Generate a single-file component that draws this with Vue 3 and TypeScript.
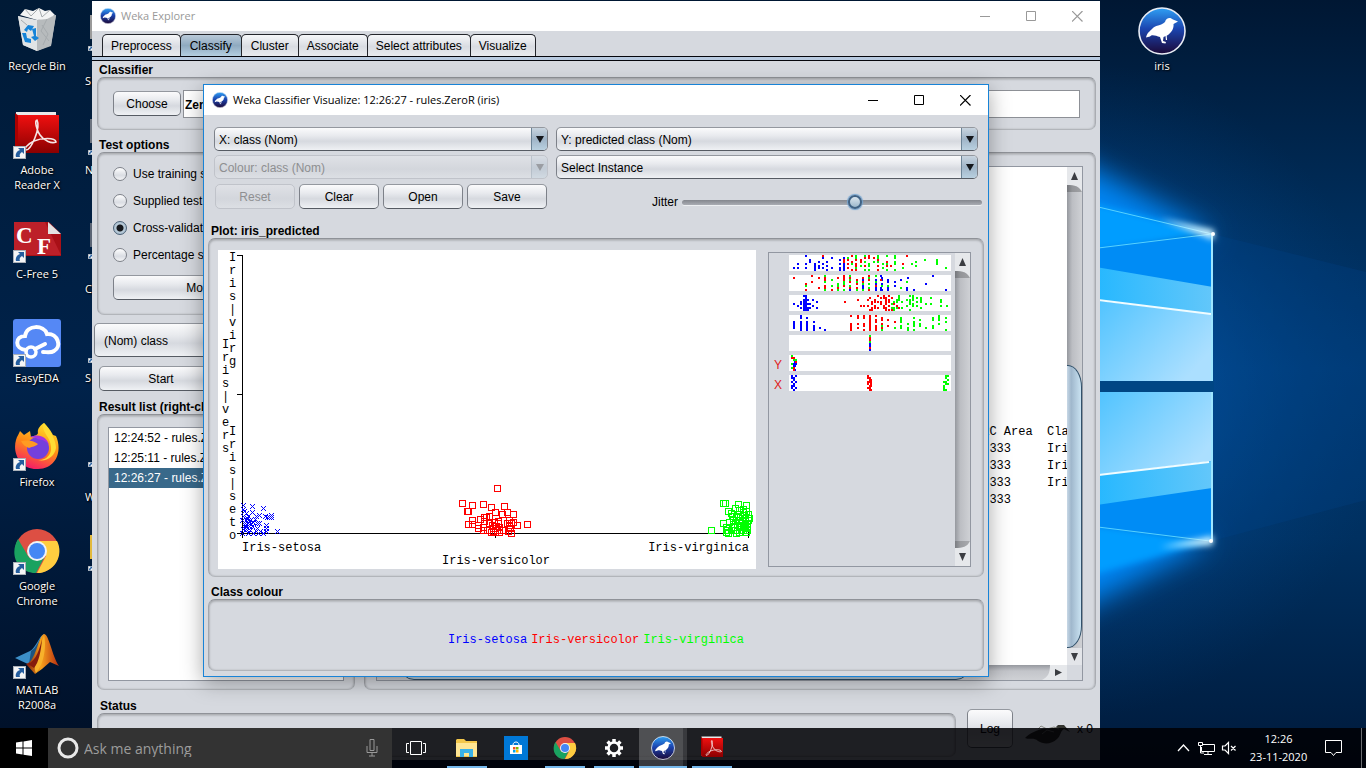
<script setup lang="ts">
import { ref } from 'vue'

type Colour = 'blue' | 'red' | 'lime'
type Point = [number, number]

const tabs = ['Preprocess', 'Classify', 'Cluster', 'Associate', 'Select attributes', 'Visualize']
const activeTab = ref('Classify')

const testOptions = ['Use training set', 'Supplied test set', 'Cross-validation', 'Percentage split']
const testOption = ref('Cross-validation')

const results = ['12:24:52 - rules.ZeroR', '12:25:11 - rules.ZeroR', '12:26:27 - rules.ZeroR']
const selectedResult = ref(2)

const jitter = ref(58)

const desktopIcons = [
  { id: 'bin', label: ['Recycle Bin'], shortcut: false },
  { id: 'adobe', label: ['Adobe', 'Reader X'], shortcut: true },
  { id: 'cfree', label: ['C-Free 5'], shortcut: true },
  { id: 'eda', label: ['EasyEDA'], shortcut: true },
  { id: 'firefox', label: ['Firefox'], shortcut: true },
  { id: 'chrome', label: ['Google', 'Chrome'], shortcut: true },
  { id: 'matlab', label: ['MATLAB', 'R2008a'], shortcut: true },
]

const hiddenColumn = [
  { tint: '#9a9a9a', text: ['', 'S'] },
  { tint: '#6d7480', text: ['N', ''] },
  { tint: '#5a6474', text: ['', 'C'] },
  { tint: '#04214a', text: ['S', ''] },
  { tint: '#04214a', text: ['', 'W'] },
  { tint: '#e2b93b', text: ['', ''] },
]

const classes: { name: string; colour: Colour }[] = [
  { name: 'Iris-setosa', colour: 'blue' },
  { name: 'Iris-versicolor', colour: 'red' },
  { name: 'Iris-virginica', colour: 'lime' },
]

const setosa: Point[] = [
  [25, 255], [34, 256], [45, 258], [25, 259], [34, 262], [28, 263], [41, 265], [38, 266], [30, 266], [47, 266],
  [53, 265], [51, 267], [53, 267], [49, 267], [25, 266], [24, 270], [28, 270], [32, 270], [35, 272], [39, 273],
  [41, 273], [30, 273], [27, 275], [31, 276], [34, 276], [48, 275], [48, 278], [25, 279], [28, 279], [32, 280],
  [38, 281], [42, 281], [48, 281], [59, 281], [24, 283], [30, 283], [35, 283], [40, 283], [45, 283], [28, 277],
  [33, 274], [29, 268], [37, 269], [26, 261], [39, 278], [31, 271], [27, 273],
]

const versicolor: Point[] = [
  [279, 238], [244, 253], [254, 255], [265, 254], [273, 257], [286, 256], [250, 261], [249, 261], [277, 262],
  [289, 262], [284, 264], [295, 264], [254, 270], [262, 269], [266, 267], [268, 267], [271, 266], [250, 274],
  [254, 274], [266, 271], [260, 275], [260, 278], [265, 277], [265, 280], [271, 273], [276, 272], [280, 273],
  [274, 275], [269, 280], [273, 282], [277, 278], [281, 277], [279, 280], [277, 282], [281, 282], [275, 278],
  [291, 270], [289, 273], [293, 273], [291, 275], [295, 272], [299, 275], [309, 274], [285, 280], [290, 281],
  [293, 283], [292, 278], [280, 271], [275, 281], [278, 276],
]

const virginica: Point[] = [
  [505, 253], [507, 253], [520, 254], [528, 255], [493, 280], [505, 273], [510, 261], [513, 263], [517, 258],
  [514, 266], [521, 260], [525, 259], [528, 261], [530, 264], [526, 265], [522, 266], [518, 267], [531, 268],
  [527, 270], [524, 271], [521, 270], [511, 272], [515, 274], [508, 277], [509, 280], [510, 283], [518, 283],
  [513, 280], [516, 277], [519, 275], [522, 277], [526, 275], [529, 273], [529, 277], [525, 280], [521, 282],
  [529, 280], [523, 273], [527, 268], [530, 270], [517, 280], [508, 282], [525, 262], [520, 264], [525, 277],
  [515, 270], [528, 282], [527, 278],
]

const cross = ([x, y]: Point) => `M${x - 2} ${y - 2}l5 5m0 -5l-5 5`
const square = ([x, y]: Point) => `M${x - 3} ${y - 3}h6v6h-6z`
const setosaPath = setosa.map(cross).join('')
const versicolorPath = versicolor.map(square).join('')
const virginicaPath = virginica.map(square).join('')

// Labels of the vertical axis are stacked one letter per line.
const axisLabels = [
  { x: 11, y: 11, letters: 'Iris|virg' },
  { x: 4, y: 98, letters: 'Iris|vers' },
  { x: 11, y: 185, letters: 'Iris|seto' },
]

// Each strip is a list of columns: x position, then eight cells from top to bottom.
const strips: { mark: string; columns: Record<number, string> }[] = [
  {
    mark: '',
    columns: {
      4: '......b.', 8: '....b.b.', 16: 'b...b.b.', 20: '..bb....', 25: '....bbbb', 29: '...b.bb.', 33: 'rb..b.b.',
      37: '...b.b.b', 42: '.b....b.', 50: '..b.b.bb', 54: '.brrbbbb', 58: '.gr.r.r.', 62: 'r..rg..r', 66: 'ggr.rrgr',
      71: '..rr.g..', 75: 'gr.g.r.g', 79: 'rr..gg.g', 84: '.r.g....', 88: 'ggrg.r.r', 93: '....g.g.', 97: 'g..rgr.g',
      101: '.....r..', 105: 'gg.gg..g', 109: '.......', 113: '....r.g.', 117: 'r.......', 122: '....g...', 126: '...g.g..',
      135: '..g.....', 147: '..ggg...', 156: '......g.',
    },
  },
  {
    mark: '',
    columns: {
      4: '.r......', 16: '....rg.r', 22: 'r..r....', 29: '.r....r.', 35: 'grrg.rrg', 42: '..g..g.r', 48: '.r..ggrg',
      54: 'rrrggr.g', 60: 'grgr.grb', 67: '..rgr.rg', 73: '.rbrgbbg', 79: 'rgr.g.gr', 86: 'g.bgbrbb', 91: 'b.r...bb',
      92: '.bb.bg.b', 98: '..bb.gbb', 105: '...b.b..', 111: '..b...g.', 117: '...g..bb', 118: '.b......', 124: '.......b',
      136: '....b...', 143: 'b.......', 156: '.......b',
    },
  },
  {
    mark: '',
    columns: {
      4: '....b...', 8: '.....b..', 11: '...bb.b.', 14: 'b.bbbbbb', 16: 'bbbbbbbb', 18: '..b.b.bb', 20: '....b.b.', 23: '..b..b..',
      27: '...b..b.', 55: '...r....', 68: '..r.....', 71: '.....r..', 74: '.....r..', 78: '..r..r..', 80: '.r.....r',
      82: '...rr.rr', 85: '..rr.rr.', 88: 'r..r..r.', 91: '.r.rr...', 94: 'rr...rr.', 96: '.rrrr.rr', 99: 'r.rr.r.r',
      102: '.r..g.gr', 104: '...gr.gg', 107: '..gg.rg.', 109: 'ggg...r.', 112: '...g..g.', 117: '..g..g..', 120: 'g.ggg..g',
      123: 'ggg.gg..', 127: '.g.g.g..', 131: '.ggg..g.', 136: '....g...', 141: '.g..g...', 151: '..gg.g..', 157: '.....g..',
    },
  },
  {
    mark: '',
    columns: {
      4: '...bbbb.', 11: 'bb.bbbbb', 17: '.b.bbbbb', 24: '...b.bbb', 30: '......b.', 35: '.......b', 61: 'r...rrrr', 68: 'rr..r.r.',
      74: 'rr..rr.r', 80: 'rrrrrrrr', 86: 'r.rr.rrr', 92: '.rr.rgrg', 98: '..r..r..', 105: '...r..g.', 111: '.ggg.gg.',
      118: '....g.gg', 124: '.g.ggg.g', 130: '..g.gg..', 136: '......g.', 143: '.gg..gg.', 149: 'ggg.g...', 156: '.g.g...g',
    },
  },
  { mark: '', columns: { 80: 'grrgbbrb' } },
  { mark: 'Y', columns: { 2: 'gr..g.g.', 4: '.rg.bbrr', 5: '..rbbb.b', 6: '..grb...' } },
  {
    mark: 'X',
    columns: {
      2: 'bb.b.bb.', 4: '.bb.bb.b', 6: 'b..b..b.', 78: 'rr.rr.r.', 80: '.rrr.rrr', 81: '..rrrr.r', 154: '...g.ggg', 156: 'gg.gg..g',
      158: 'g.g.g...',
    },
  },
]

const stripPath = (columns: Record<number, string>, key: string) =>
  Object.entries(columns)
    .flatMap(([x, cells]) => [...cells].map((c, i) => (c === key ? `M${x} ${i * 2}h2v2h-2z` : '')))
    .join('')

const report = ['PRC Area  Class', '0.333     Iris', '0.333     Iris', '0.333     Iris', '0.333'].join('\n')
</script>

<template>
  <main class="desktop">
    <svg class="defs" aria-hidden="true">
      <defs>
        <linearGradient id="g-weka" x1="0" y1="0" x2="0" y2="1">
          <stop offset="0" stop-color="#2fa0f4" /><stop offset=".45" stop-color="#1b45b0" /><stop offset="1" stop-color="#1b0837" />
        </linearGradient>
        <linearGradient id="g-red" x1="0" y1="0" x2="0" y2="1">
          <stop offset="0" stop-color="#f01010" /><stop offset="1" stop-color="#8a0000" />
        </linearGradient>
        <linearGradient id="g-fox" x1=".7" y1="0" x2=".3" y2="1">
          <stop offset="0" stop-color="#ffe22b" /><stop offset=".5" stop-color="#ff8a16" /><stop offset="1" stop-color="#f5156c" />
        </linearGradient>
        <linearGradient id="g-peak" x1="0" y1="0" x2="1" y2="0">
          <stop offset="0" stop-color="#7a1408" /><stop offset=".45" stop-color="#f7a21c" /><stop offset="1" stop-color="#b52a10" />
        </linearGradient>
        <symbol id="i-weka" viewBox="0 0 48 48">
          <circle cx="24" cy="24" r="23" fill="url(#g-weka)" stroke="#e9edf5" stroke-width="1.6" />
          <path d="M40 14.500L35.500 17C36 21 34 25 30 28L25.500 30L25 34L28 35L27.500 36.500L24 36L22 30C18 29 14 27 12 29.500L8 30.500C9 26 12 24 14 22C17 18 23 19 27 15C28 11 32 9.500 35 12.500Z" fill="#fff" />
          <path d="M28 28L28.500 33" stroke="#fff" stroke-width="1.200" />
        </symbol>
        <symbol id="i-bin" viewBox="0 0 48 48">
          <path d="M5 9L10 38L24 44L38 38L43 8L24 15Z" fill="#c9ccce" />
          <path d="M5 9L24 13L24 44L10 38Z" fill="#e1e4e5" />
          <path d="M24 13L43 8L38 39L24 44Z" fill="#b7bbbd" />
          <path d="M7 8L12 2L20 4L26 1L32 4L37 3L42 8L34 12L24 13Z" fill="#f3f4f4" />
          <path d="M12 2L18 9L26 1L29 10L37 3M29 18L35 27L30 38M34 12L28 24L36 34M8 13L14 18" stroke="#a6abae" fill="none" />
          <path d="M11 23L15 18L21 19L18 24L15 22L14 25ZM19 22L23 21L23 29L26 31L22 34L18 30L21 29ZM9 26L13 26L14 31L18 32L18 36L12 35Z" fill="#1684d8" />
        </symbol>
        <symbol id="i-adobe" viewBox="0 0 48 48">
          <path d="M3 1H43V4L6 5L5 40L2 38Z" fill="#e9e9ea" />
          <path d="M2 2L6 5V42L2 39Z" fill="#a00" />
          <rect x="5" y="4" width="41" height="38" fill="url(#g-red)" />
          <path d="M24 9C21 9 24 20 27 24C31 30 39 33 43 31C42 26 28 27 21 30C13 34 11 38 13 39C18 39 28 17 24 9Z" fill="none" stroke="#f5e6e6" stroke-width="1.600" />
        </symbol>
        <symbol id="i-cfree" viewBox="0 0 48 48">
          <path d="M1 7H36L48 19V41H1Z" fill="#a91017" /><path d="M1 7H32L48 40H1Z" fill="#bd2029" />
          <path d="M35 7L48 19H35Z" fill="#e3e3e3" />
          <text x="3" y="28" class="cf">C</text><text x="24" y="39" class="cf">F</text>
        </symbol>
        <symbol id="i-eda" viewBox="0 0 48 48">
          <rect width="48" height="48" rx="3" fill="#5588f5" />
          <path d="M13 31C1 30 2 17 12 17C14 5 31 6 34 15C45 14 49 28 41 32C38 34 34 33 30 33" fill="none" stroke="#fff" stroke-width="4" stroke-linecap="round" />
          <circle cx="18" cy="33" r="5" fill="none" stroke="#fff" stroke-width="3.500" /><path d="M22 30L32 25" stroke="#fff" stroke-width="4" stroke-linecap="round" />
        </symbol>
        <symbol id="i-firefox" viewBox="0 0 48 48">
          <path d="M31 0C36 5 38 8 40 12L43 13C49 26 45 45 25 46C8 47-1 31 3 17C4 13 6 11 7 8L11 12L17 8L18 14C22 12 24 13 25 10C24 7 27 2 31 0Z" fill="url(#g-fox)" />
          <circle cx="25" cy="25" r="11" fill="#7440dc" /><path d="M17 14C26 10 34 14 36 22C31 15 27 18 23 15Z" fill="#a733df" />
          <path d="M8 18C14 17 20 17 25 21C22 24 20 23 16 25C13 24 10 22 8 18Z" fill="#ff9b22" />
          <path d="M31 0C27 8 38 14 38 24C39 32 32 38 25 37C34 39 42 33 43 25C43 19 39 9 31 0Z" fill="#ffdc34" />
        </symbol>
        <symbol id="i-chrome" viewBox="0 0 48 48">
          <circle cx="24" cy="24" r="22" fill="#dd4f43" />
          <path d="M24 14H44A22 22 0 0 1 24 46L33 29Z" fill="#ffcd40" />
          <path d="M5 12L15 29C18 33 24 35 32 29L23 46C4 46-4 27 5 12Z" fill="#1aa260" />
          <circle cx="24" cy="24" r="10" fill="#f2f3f5" /><circle cx="24" cy="24" r="8" fill="#4587f4" />
        </symbol>
        <symbol id="i-matlab" viewBox="0 0 48 48">
          <path d="M2 27L17 20C23 17 26 5 31 3L28 24L17 34Z" fill="#3c8fc8" /><path d="M18 20C24 17 26 7 31 3L26 23L16 33Z" fill="#1e547f" />
          <path d="M31 3C36 3 39 25 46 35L37 31L29 38L22 43L13 33C23 31 25 5 31 3Z" fill="url(#g-peak)" />
          <path d="M31 4C34 17 30 35 23 42C19 34 27 18 31 4Z" fill="#f7b12b" /><path d="M15 33C23 30 27 17 29 8C28 20 26 31 21 37Z" fill="#851a0c" />
        </symbol>
        <symbol id="i-shortcut" viewBox="0 0 13 13">
          <rect x=".5" y=".5" width="12" height="12" fill="#f4f5f6" stroke="#aab0b8" />
          <path d="M5 2H11V8L9 6C7 7 6 9 7 11H3C2 8 4 5 7 4Z" fill="#245d9e" />
        </symbol>
        <symbol id="i-win-min" viewBox="0 0 11 11"><path d="M0 5.500H10" stroke="currentColor" fill="none" /></symbol>
        <symbol id="i-win-max" viewBox="0 0 11 11"><path d="M.5 .5H9.500V9.500H.5Z" stroke="currentColor" fill="none" /></symbol>
        <symbol id="i-win-close" viewBox="0 0 11 11"><path d="M0 0L10.500 10.500M10.500 0L0 10.500" stroke="currentColor" stroke-width="1.200" fill="none" /></symbol>
      </defs>
    </svg>

    <svg class="wallpaper" viewBox="0 0 1366 768" preserveAspectRatio="none" aria-hidden="true">
      <defs>
        <linearGradient id="w-base" x1="0" y1="0" x2="0" y2="1">
          <stop offset="0" stop-color="#001733" /><stop offset=".28" stop-color="#002d5a" /><stop offset=".48" stop-color="#003870" />
          <stop offset=".7" stop-color="#003060" /><stop offset="1" stop-color="#001a3b" />
        </linearGradient>
        <linearGradient id="w-left" x1="0" y1="0" x2="0" y2="1">
          <stop offset="0" stop-color="#001a36" /><stop offset=".5" stop-color="#00224a" /><stop offset="1" stop-color="#000f26" />
        </linearGradient>
        <radialGradient id="w-glow" gradientUnits="userSpaceOnUse" cx="1060" cy="390" r="330">
          <stop offset="0" stop-color="#0a8cff" /><stop offset=".5" stop-color="#0868c8" stop-opacity=".6" /><stop offset="1" stop-color="#004a95" stop-opacity="0" />
        </radialGradient>
        <linearGradient id="w-pane" x1="0" y1="0" x2="1" y2=".6">
          <stop offset="0" stop-color="#4cc2ff" /><stop offset="1" stop-color="#abdfff" />
        </linearGradient>
        <linearGradient id="w-cyan" x1="0" y1="0" x2="1" y2="0">
          <stop offset="0" stop-color="#23b7ff" /><stop offset="1" stop-color="#63c7fa" />
        </linearGradient>
        <filter id="w-soft" x="-30%" y="-30%" width="160%" height="160%"><feGaussianBlur stdDeviation="14" /></filter>
        <filter id="w-spark" x="-50%" y="-50%" width="200%" height="200%"><feGaussianBlur stdDeviation="3" /></filter>
      </defs>
      <rect width="1366" height="768" fill="url(#w-base)" />
      <rect width="300" height="768" fill="url(#w-left)" />
      <rect x="700" width="666" height="768" fill="url(#w-glow)" opacity=".5" />
      <path d="M1213 234L1366 272V500L1212 541Z" fill="#00458c" opacity=".25" />
      <path d="M1050 145L1213 234L1050 290ZM1050 490L1212 541L1050 625Z" fill="#0584f2" filter="url(#w-soft)" />
      <path d="M1080 200L1213 234L1080 252ZM1080 524L1212 541L1080 578Z" fill="#009dff" filter="url(#w-spark)" />
      <path d="M1090 250L1213 234V381H1090Z" fill="#008cf5" />
      <path d="M1090 266L1213 287V314L1090 300Z" fill="url(#w-cyan)" />
      <path d="M1090 300L1213 314V381H1090Z" fill="url(#w-pane)" />
      <path d="M1090 392H1212V541L1090 526Z" fill="#008cf5" />
      <path d="M1090 392H1212V461L1090 476Z" fill="url(#w-pane)" />
      <path d="M1090 476L1212 461V488L1090 506Z" fill="url(#w-cyan)" />
      <path d="M1090 381H1214V392H1090Z" fill="#004684" />
      <path d="M1090 299L1211 314M1090 476L1209 462" stroke="#f0fcff" stroke-width="2" />
      <path d="M1090 205L1212 234M1090 249L1212 234M1090 526L1210 541" stroke="#57d2ff" stroke-width="1" />
      <path d="M1212 235V381M1212 392V541" stroke="#9ee6ff" stroke-width="2" />
      <path d="M1160 219L1214 230V240ZM1160 547L1213 536V545Z" fill="#d8f6ff" filter="url(#w-spark)" />
      <circle cx="1213" cy="234" r="2" fill="#fff" /><circle cx="1211" cy="541" r="2" fill="#fff" />
    </svg>

    <nav class="icons" aria-label="Desktop">
      <a v-for="icon in desktopIcons" :key="icon.id" class="shortcut" href="#">
        <span class="art">
          <svg class="picture"><use :href="`#i-${icon.id}`" /></svg>
          <svg v-if="icon.shortcut" class="badge"><use href="#i-shortcut" /></svg>
        </span>
        <span v-for="line in icon.label" :key="line" class="caption">{{ line }}</span>
      </a>
    </nav>

    <div class="second-column" aria-hidden="true">
      <div v-for="(item, i) in hiddenColumn" :key="i" class="sliver">
        <span class="sliver-art" :style="{ background: item.tint }"></span>
        <svg class="sliver-badge"><use href="#i-shortcut" /></svg>
        <span class="caption">{{ item.text[0] }}</span>
        <span class="caption">{{ item.text[1] }}</span>
      </div>
    </div>

    <a class="shortcut iris" href="#">
      <span class="art"><svg class="picture"><use href="#i-weka" /></svg></span>
      <span class="caption">iris</span>
    </a>

    <section class="window explorer" aria-label="Weka Explorer">
      <header class="titlebar inactive">
        <svg class="app-icon"><use href="#i-weka" /></svg>
        <h1>Weka Explorer</h1>
        <button aria-label="Minimize"><svg><use href="#i-win-min" /></svg></button>
        <button aria-label="Maximize"><svg><use href="#i-win-max" /></svg></button>
        <button aria-label="Close"><svg><use href="#i-win-close" /></svg></button>
      </header>
      <div class="tabs" role="tablist">
        <button
          v-for="tab in tabs"
          :key="tab"
          role="tab"
          :aria-selected="tab === activeTab"
          :class="['tab', { active: tab === activeTab }]"
          @click="activeTab = tab"
        >{{ tab }}</button>
      </div>
      <div class="tab-rule"></div>

      <div class="explorer-body">
        <h2>Classifier</h2>
        <div class="group classifier">
          <button class="nimbus choose">Choose</button>
          <input class="scheme" aria-label="Classifier scheme" value="ZeroR" readonly />
        </div>

        <div class="columns">
          <div class="left">
            <h2 class="spaced">Test options</h2>
            <div class="group options">
              <label v-for="option in testOptions" :key="option">
                <input v-model="testOption" type="radio" name="test" :value="option" />{{ option }}
              </label>
              <button class="nimbus">More options...</button>
            </div>
            <div class="combo big">
              <select aria-label="Class attribute"><option>(Nom) class</option></select>
            </div>
            <button class="nimbus start">Start</button>
            <h2 class="spaced">Result list (right-click for options)</h2>
            <div class="group result-group">
              <ul class="results">
                <li v-for="(result, i) in results" :key="result" :class="{ selected: i === selectedResult }" @click="selectedResult = i">{{ result }}</li>
              </ul>
            </div>
          </div>
          <div class="right">
            <h2 class="spaced">Classifier output</h2>
            <div class="group output-group">
              <div class="output">
                <pre>{{ report }}</pre>
                <div class="vscroll">
                  <svg class="cap" viewBox="0 0 15 25"><path d="M0 0H15V25C12 19 8 18 0 18Z" fill="#e6e8eb" /><path d="M0 18C8 18 12 19 15 25L15 27L0 27Z" fill="#000" opacity=".22" /><path d="M7.500 5L11 13H4Z" fill="#3b3d42" /></svg>
                  <div class="track"><div class="thumb"></div></div>
                  <svg class="cap-end" viewBox="0 0 15 17"><rect width="15" height="17" fill="#e3e5e9" /><path d="M4 5H11L7.500 13Z" fill="#3b3d42" /></svg>
                </div>
                <div class="hscroll">
                  <div class="hthumb"></div>
                  <svg class="hcap" viewBox="0 0 25 15"><path d="M8 0H25V15H0C6 12 8 8 8 0Z" fill="#e6e8eb" /><path d="M13 4L20 7.500L13 11Z" fill="#3b3d42" /></svg>
                </div>
              </div>
            </div>
          </div>
        </div>

        <footer class="status">
          <div class="status-main">
            <h2 class="spaced">Status</h2>
            <div class="group"></div>
          </div>
          <button class="nimbus log">Log</button>
          <svg class="kiwi" viewBox="0 0 46 22">
            <path d="M0 14C5 9 10 7 17 5C24 3 27 5 31 3L33 1H39L45 8L39 5C35 7 36 12 32 15C27 20 19 21 13 17C9 13 5 16 0 14Z" fill="#33342f" />
            <path d="M13 5L16 2L22 5L29 3L34 5M17 10L22 6L29 8" stroke="#888983" fill="none" />
          </svg>
          <span class="count">x 0</span>
        </footer>
      </div>
    </section>

    <section class="window dialog" aria-label="Weka Classifier Visualize">
      <header class="titlebar">
        <svg class="app-icon"><use href="#i-weka" /></svg>
        <h1>Weka Classifier Visualize: 12:26:27 - rules.ZeroR (iris)</h1>
        <button aria-label="Minimize"><svg><use href="#i-win-min" /></svg></button>
        <button aria-label="Maximize"><svg><use href="#i-win-max" /></svg></button>
        <button aria-label="Close"><svg><use href="#i-win-close" /></svg></button>
      </header>

      <div class="controls">
        <div class="combo"><select aria-label="X axis"><option>X: class (Nom)</option></select><span class="arrow"></span></div>
        <div class="combo"><select aria-label="Y axis"><option>Y: predicted class (Nom)</option></select><span class="arrow"></span></div>
        <div class="combo disabled"><select aria-label="Colour" disabled><option>Colour: class (Nom)</option></select><span class="arrow"></span></div>
        <div class="combo"><select aria-label="Selection shape"><option>Select Instance</option></select><span class="arrow"></span></div>
        <div class="buttons">
          <button class="nimbus" disabled>Reset</button>
          <button class="nimbus">Clear</button>
          <button class="nimbus">Open</button>
          <button class="nimbus">Save</button>
        </div>
        <div class="jitter">
          <label for="jitter">Jitter</label>
          <input id="jitter" v-model="jitter" type="range" min="0" max="100" />
        </div>
      </div>

      <h2 class="plot-title">Plot: iris_predicted</h2>
      <div class="group plot-group">
        <svg class="plot" viewBox="0 0 538 319" role="img" aria-label="Plot of class against predicted class">
          <rect width="538" height="319" fill="#fff" />
          <g v-for="label in axisLabels" :key="label.y">
            <text v-for="(letter, i) in label.letters" :key="i" :x="label.x" :y="label.y + i * 13">{{ letter }}</text>
          </g>
          <path class="axis" d="M24.500 5V288M19 5.500H24M19 144.500H24M19 283.500H530.500M277.500 284V288M530.500 281V288" />
          <g class="marks">
            <path :d="setosaPath" stroke="blue" />
            <path :d="versicolorPath" stroke="red" transform="translate(.5 .5)" />
            <path :d="virginicaPath" stroke="lime" transform="translate(.5 .5)" />
          </g>
          <text x="24" y="301">Iris-setosa</text>
          <text x="278" y="314" text-anchor="middle">Iris-versicolor</text>
          <text x="531" y="301" text-anchor="end">Iris-virginica</text>
        </svg>
        <div class="attributes">
          <div class="strips">
            <div v-for="(strip, i) in strips" :key="i" class="strip">
              <span class="mark">{{ strip.mark }}</span>
              <svg viewBox="0 0 162 16" preserveAspectRatio="none" shape-rendering="crispEdges">
                <rect width="162" height="16" fill="#fff" />
                <path :d="stripPath(strip.columns, 'b')" fill="blue" />
                <path :d="stripPath(strip.columns, 'r')" fill="red" />
                <path :d="stripPath(strip.columns, 'g')" fill="lime" />
              </svg>
            </div>
          </div>
          <div class="vscroll">
            <svg class="cap" viewBox="0 0 15 25"><path d="M0 0H15V25C12 19 8 18 0 18Z" fill="#e6e8eb" /><path d="M0 18C8 18 12 19 15 25L15 27L0 27Z" fill="#000" opacity=".22" /><path d="M7.500 5L11 13H4Z" fill="#3b3d42" /></svg>
            <div class="track"></div>
            <svg class="cap" viewBox="0 0 15 25"><path d="M0 7C8 7 12 6 15 0V25H0Z" fill="#e6e8eb" /><path d="M0 0V7C8 7 12 6 15 0Z" fill="#000" opacity=".18" /><path d="M4 12H11L7.500 20Z" fill="#3b3d42" /></svg>
          </div>
        </div>
      </div>

      <h2 class="class-title">Class colour</h2>
      <div class="group legend">
        <span v-for="item in classes" :key="item.name" :class="item.colour">{{ item.name }}</span>
      </div>
    </section>

    <footer class="taskbar">
      <button class="start-button" aria-label="Start">
        <svg viewBox="0 0 16 16"><path d="M0 2.500L6.500 1.500V7.500H0ZM7.500 1.400L16 0V7.500H7.500ZM0 8.500H6.500V14.500L0 13.500ZM7.500 8.500H16V16L7.500 14.700Z" fill="#fff" /></svg>
      </button>
      <div class="search">
        <svg class="ring" viewBox="0 0 22 22"><circle cx="11" cy="11" r="9" fill="none" stroke="#e8e8e8" stroke-width="3" /></svg>
        <input type="text" aria-label="Search" placeholder="Ask me anything" />
        <svg class="mic" viewBox="0 0 12 18"><path d="M4 .5H8V11.500H4ZM1 7V13.500H11V7M6 14V17M3 17H9" fill="none" stroke="#999" /></svg>
      </div>
      <button class="task view" aria-label="Task view">
        <svg class="glyph" viewBox="0 0 20 14"><path d="M4.500 .5H15.500V13.500H4.500ZM3 2.500H.5V11.500H3M17 2.500H19.500V11.500H17" fill="none" stroke="#fff" /></svg>
      </button>
      <button class="task open" aria-label="File Explorer">
        <svg class="medium" viewBox="0 0 24 24"><path d="M1 4L2 3H9L11 5H22V21H1Z" fill="#f3c74b" /><path d="M1 7H22V20H1Z" fill="#ffe694" /><path d="M5 21V13H18V21H14V17H9V21Z" fill="#3ab2e8" /></svg>
      </button>
      <button class="task" aria-label="Store">
        <svg class="medium" viewBox="0 0 24 24"><rect width="24" height="24" fill="#0078d7" /><path d="M6 9H18V18H6Z" fill="#fff" /><path d="M9 9C9 5 15 5 15 9" fill="none" stroke="#fff" /><path d="M9 11H11.500V13.500H9Z" fill="#f25022" /><path d="M12 11H14.500V13.500H12Z" fill="#7fba00" /><path d="M9 14H11.500V16.500H9Z" fill="#00a4ef" /><path d="M12 14H14.500V16.500H12Z" fill="#ffb900" /></svg>
      </button>
      <button class="task open" aria-label="Chrome"><svg class="medium"><use href="#i-chrome" /></svg></button>
      <button class="task open" aria-label="Settings">
        <svg class="medium" viewBox="0 0 24 24"><circle cx="12" cy="12" r="5.500" fill="none" stroke="#fff" stroke-width="2.500" /><path d="M12 3V6M12 18V21M3 12H6M18 12H21M5.600 5.600L7.800 7.800M16.200 16.200L18.400 18.400M18.400 5.600L16.200 7.800M7.800 16.200L5.600 18.400" stroke="#fff" stroke-width="3.500" /></svg>
      </button>
      <button class="task open current" aria-label="Weka"><svg class="medium"><use href="#i-weka" /></svg></button>
      <button class="task open" aria-label="Adobe Reader"><svg class="medium"><use href="#i-adobe" /></svg></button>
      <div class="tray">
        <button aria-label="Show hidden icons"><svg viewBox="0 0 17 14"><path d="M3 10L8.500 4L14 10" fill="none" stroke="#fff" stroke-width="1.300" /></svg></button>
        <button aria-label="Network"><svg viewBox="0 0 17 14"><path d="M5 3.500H16.500V10.500H3.500V6M6 13.500H14M10 11V13M.5 1.500H4.500V4.500H.5ZM2.500 5V12H6" fill="none" stroke="#fff" /></svg></button>
        <button aria-label="Volume"><svg viewBox="0 0 17 14"><path d="M1.500 5H4L7.500 1.500V12.500L4 9H1.500ZM10 5L14.500 9.500M14.500 5L10 9.500" fill="none" stroke="#fff" stroke-width="1.200" /></svg></button>
      </div>
      <time class="clock"><span>12:26</span><span>23-11-2020</span></time>
      <button class="notify" aria-label="Notifications"><svg viewBox="0 0 17 17"><path d="M.5 .5H16.500V12.500H11L8.500 15.500L6 12.500H.5Z" fill="none" stroke="#fff" /></svg></button>
      <span class="peek"></span>
    </footer>
  </main>
</template>

<style>
body {
  margin: 0;
}
</style>

<style scoped>
.desktop {
  position: relative;
  height: 100vh;
  overflow: hidden;
  background: #001f42;
  color: #000;
  font: 12px/16px "Liberation Sans", sans-serif;
}
.desktop * {
  box-sizing: border-box;
}
.defs {
  position: absolute;
  width: 0;
  height: 0;
}
.cf {
  font: bold 23px "Liberation Serif", serif;
  fill: #fff;
}
.wallpaper {
  position: absolute;
  inset: 0;
  width: 100%;
  height: 100%;
}
button,
input,
select {
  font: inherit;
  color: inherit;
  margin: 0;
}
button {
  padding: 0;
  border: 0;
  background: none;
}
h1,
h2,
pre,
ul {
  margin: 0;
}

/* Desktop shortcuts */
.icons {
  position: absolute;
  top: 7px;
  left: 0;
  width: 74px;
  display: flex;
  flex-direction: column;
}
.shortcut {
  display: flex;
  flex-direction: column;
  align-items: center;
  height: 104px;
  color: #fff;
  text-decoration: none;
}
.iris {
  position: absolute;
  top: 7px;
  right: 167px;
  width: 74px;
}
.art {
  position: relative;
  width: 48px;
  height: 48px;
  margin-bottom: 3px;
}
.picture {
  display: block;
  width: 48px;
  height: 48px;
}
.badge {
  position: absolute;
  left: 0;
  bottom: 0;
  width: 13px;
  height: 13px;
}
.caption {
  height: 15px;
  font: 11px/15px "Open Sans", sans-serif;
  white-space: nowrap;
  color: #fff;
  text-shadow: 1px 1px 2px #000, 0 0 2px #000;
}
.second-column {
  position: absolute;
  top: 7px;
  left: 81px;
  width: 12px;
}
.sliver {
  display: flex;
  flex-direction: column;
  align-items: flex-end;
  height: 104px;
}
.sliver-art {
  width: 3px;
  height: 24px;
  margin: 8px 0 3px;
}
.sliver-badge {
  width: 5px;
  height: 13px;
  margin-bottom: 3px;
}
.sliver .caption {
  align-self: flex-start;
  padding-left: 4px;
}

/* Window frames */
.window {
  position: absolute;
  display: flex;
  flex-direction: column;
  background: #d6d9df;
}
.explorer {
  inset: 1px 266px 8px 92px;
}
.dialog {
  inset: 84px 377px 91px 203px;
  border: 1px solid #1883d7;
  box-shadow: 0 5px 20px rgba(0, 0, 0, 0.35);
}
.titlebar {
  display: flex;
  align-items: center;
  flex: none;
  height: 30px;
  padding-left: 8px;
  background: #fff;
}
.app-icon {
  width: 16px;
  height: 16px;
}
.titlebar h1 {
  flex: 1;
  padding-left: 5px;
  font: 11px/16px "Open Sans", sans-serif;
}
.titlebar button {
  width: 46px;
  height: 30px;
  display: grid;
  place-items: center;
}
.titlebar button svg {
  width: 11px;
  height: 11px;
}
.titlebar.inactive {
  color: #999;
}
h2 {
  height: 16px;
  padding-left: 2px;
  font: bold 12px/18px "Liberation Sans", sans-serif;
  white-space: nowrap;
}
.spaced {
  margin-top: 6px;
}
.group {
  border: 1px solid;
  border-color: #8f9298 #a9acb2 #b2b5ba #a4a7ad;
  border-radius: 7px;
  box-shadow: inset 0 2px 2px rgba(0, 0, 0, 0.14), inset 1px 0 2px rgba(0, 0, 0, 0.1), inset -1px 0 2px rgba(0, 0, 0, 0.1);
}
.nimbus,
.combo {
  border: 1px solid;
  border-color: #94989f #7d8189 #565b63 #7d8189;
  border-radius: 5px;
  background: linear-gradient(#fbfbfc 0, #e8eaee 35%, #d6d9df 60%, #eff1f4 100%);
}
.nimbus {
  height: 25px;
}
.nimbus:disabled,
.combo.disabled {
  border-color: #c0c3ca;
  background: linear-gradient(#dfe1e6, #d3d6dc 60%, #dcdfe4);
  color: #8e8f91;
}

/* Explorer */
.tabs {
  display: flex;
  flex: none;
  padding: 3px 0 0 10px;
}
.tab {
  height: 22px;
  padding: 0 9px;
  margin-right: -1px;
  border: 1px solid #23252b;
  border-bottom: 0;
  border-radius: 5px 5px 0 0;
  background: linear-gradient(#f6f7f9, #d9dce2 55%, #e8eaee);
}
.tab:first-child,
.tab:nth-child(n + 4) {
  padding: 0 8px;
}
.tab.active {
  background: linear-gradient(#b9c9d8, #8faac0 50%, #b4cee0);
}
.tab-rule {
  flex: none;
  height: 5px;
  border: solid #05060c;
  border-width: 1px 0;
  background: #b8cae0;
}
.explorer-body {
  flex: 1;
  min-height: 0;
  display: flex;
  flex-direction: column;
  padding: 0 4px 3px 5px;
}
.classifier {
  display: flex;
  align-items: center;
  gap: 2px;
  height: 53px;
  padding: 0 15px;
}
.choose {
  width: 68px;
}
.scheme {
  flex: 1;
  height: 28px;
  padding: 2px 0 0 1px;
  border: 1px solid #8d9096;
  background: #fff;
  font-weight: bold;
}
.columns {
  flex: 1;
  min-height: 0;
  display: flex;
  gap: 9px;
}
.left,
.right {
  display: flex;
  flex-direction: column;
}
.left {
  width: 258px;
}
.right {
  flex: 1;
  min-width: 0;
}
.options {
  display: flex;
  flex-direction: column;
  height: 163px;
  padding: 7px 15px 0;
}
.options label {
  display: flex;
  align-items: center;
  gap: 6px;
  height: 27px;
}
.options input {
  appearance: none;
  width: 14px;
  height: 14px;
  border: 1px solid #7d8189;
  border-radius: 50%;
  background: linear-gradient(#fff, #dadde3 60%, #f3f4f6);
}
.options input:checked {
  border-color: #4a6076;
  background: radial-gradient(circle, #15181c 0 3px, #b9cbd9 4px, #9db4c6);
}
.options .nimbus {
  margin-top: 7px;
}
.combo {
  position: relative;
  height: 24px;
}
.combo select {
  appearance: none;
  width: 100%;
  height: 100%;
  padding: 1px 4px 0;
  border: 0;
  background: none;
  opacity: 1;
}
.combo.big {
  height: 34px;
  margin: 8px 0 9px -3px;
}
.combo.big select {
  padding-left: 9px;
}
.start {
  width: 124px;
  margin: 0 0 1px 2px;
}
.result-group {
  flex: 1;
  padding: 12px 10px 8px;
}
.results {
  height: 100%;
  padding: 0;
  border: 1px solid #9297a1;
  background: #fff;
  list-style: none;
}
.results li {
  height: 20px;
  padding-left: 5px;
  line-height: 20px;
  white-space: nowrap;
}
.results .selected {
  background: #39698a;
  color: #fff;
}
.output-group {
  flex: 1;
  padding: 13px 12px 8px 11px;
}
.output {
  display: grid;
  grid-template: 1fr 15px / 1fr 15px;
  height: 100%;
  border: 1px solid #9297a1;
}
.output pre {
  overflow: hidden;
  padding: 257px 0 0 598px;
  background: #fff;
  font: 12px/17px "Liberation Mono", monospace;
}
.vscroll {
  display: flex;
  flex-direction: column;
  width: 15px;
  background: linear-gradient(90deg, #96999f, #bcbec3 35%, #cfd1d5);
}
.cap {
  flex: none;
  width: 15px;
  height: 25px;
}
.cap-end {
  flex: none;
  width: 15px;
  height: 17px;
}
.track {
  flex: 1;
}
.output .track {
  display: flex;
  align-items: flex-end;
}
.thumb {
  width: 15px;
  height: 62%;
  border: 1px solid #31516b;
  border-left: 0;
  border-radius: 0 14px 14px 0 / 0 22px 22px 0;
  background: linear-gradient(90deg, #c8d8e6, #9fb7cc 30%, #c9e2f1);
}
.hscroll {
  display: flex;
  justify-content: flex-end;
  background: linear-gradient(#96999f, #c3c5ca 40%, #cfd1d5);
}
.hthumb {
  width: 570px;
  margin-right: 72px;
  border: 1px solid #31516b;
  border-radius: 0 0 14px 14px;
  background: #b4cde0;
}
.hcap {
  width: 25px;
  height: 15px;
}
.status {
  display: flex;
  height: 67px;
}
.status-main {
  flex: 1;
  display: flex;
  flex-direction: column;
}
.status-main .group {
  flex: 1;
}
.status h2 {
  margin-top: 7px;
  padding-left: 3px;
}
.log {
  width: 46px;
  height: 39px;
  margin: 19px 12px 0 11px;
}
.kiwi {
  width: 46px;
  height: 22px;
  margin-top: 34px;
}
.count {
  width: 19px;
  margin: 31px 0 0 6px;
  white-space: nowrap;
}

/* Visualize dialog */
.controls {
  display: grid;
  grid-template-columns: 334fr 422fr;
  gap: 4px 8px;
  padding: 12px 10px 0;
}
.arrow {
  position: absolute;
  top: 0;
  right: 0;
  bottom: 0;
  width: 16px;
  border-left: 1px solid #6c8497;
  border-radius: 0 4px 4px 0;
  background: linear-gradient(#c8d4df, #9fb4c7 50%, #b9d0e0);
  pointer-events: none;
}
.arrow::after {
  content: "";
  position: absolute;
  top: 8px;
  left: 4px;
  border: 4px solid transparent;
  border-top: 7px solid #14171c;
  border-bottom: 0;
}
.disabled .arrow {
  opacity: 0.3;
}
.combo.disabled select {
  color: #8e8f91;
}
.buttons {
  display: flex;
  gap: 4px;
  padding: 1px 1px 0;
}
.buttons .nimbus {
  flex: 1;
}
.jitter {
  display: flex;
  align-items: center;
  justify-content: flex-end;
  align-self: end;
  gap: 4px;
  height: 14px;
  margin-right: -4px;
}
.jitter input {
  appearance: none;
  width: 300px;
  height: 15px;
  background: none;
}
.jitter input::-webkit-slider-runnable-track {
  height: 5px;
  border-radius: 3px;
  background: linear-gradient(#84878e, #a9acb3);
  box-shadow: 0 1px 0 #eceef1;
}
.jitter input::-webkit-slider-thumb {
  appearance: none;
  width: 14px;
  height: 14px;
  margin-top: -5px;
  border: 2px solid #3f6285;
  border-radius: 50%;
  background: linear-gradient(#dbe6ee, #9db8cc);
  box-shadow: 0 0 1px 1px #73a4d1;
}
.plot-title {
  margin: 13px 0 0 5px;
}
.plot-group {
  flex: 1;
  display: grid;
  grid-template-columns: 538fr 203fr;
  align-items: center;
  gap: 12px;
  margin: 0 4px;
  padding: 5px 12px 2px 9px;
}
.plot {
  display: block;
  width: 100%;
}
.plot text {
  font: 12px "Liberation Mono", monospace;
  white-space: pre;
}
.axis {
  fill: none;
  stroke: #000;
}
.marks path {
  fill: none;
  shape-rendering: crispEdges;
}
.attributes {
  align-self: stretch;
  display: flex;
  margin: 8px 0 7px;
  border: 1px solid #9297a1;
}
.strips {
  flex: 1;
  display: flex;
  flex-direction: column;
  gap: 4px;
  padding: 2px 4px 0 5px;
}
.strip {
  display: flex;
  height: 16px;
}
.mark {
  width: 15px;
  line-height: 20px;
  color: #e02020;
}
.strip svg {
  flex: 1;
  min-width: 0;
  height: 16px;
}
.class-title {
  margin: 6px 0 0 5px;
}
.legend {
  display: flex;
  align-items: center;
  justify-content: center;
  gap: 4px;
  height: 72px;
  margin: 0 4px 5px;
  padding-top: 10px;
  font-family: "Liberation Mono", monospace;
}
.blue {
  color: #00f;
}
.red {
  color: #f00;
}
.lime {
  color: #0f0;
}

/* Taskbar */
.taskbar {
  position: absolute;
  inset: auto 0 0;
  display: flex;
  height: 40px;
  background: rgba(0, 0, 4, 0.86);
  color: #fff;
  font-family: "Open Sans", sans-serif;
}
.start-button {
  width: 48px;
  background: #000;
}
.start-button svg {
  display: block;
  width: 16px;
  margin: 0 auto;
}
.search {
  display: flex;
  align-items: center;
  width: 344px;
  padding: 0 14px 0 9px;
  background: #333;
}
.ring {
  width: 22px;
  height: 22px;
}
.search input {
  flex: 1;
  min-width: 0;
  padding: 2px 5px 0;
  border: 0;
  background: none;
  font-size: 14px;
}
.search input::placeholder {
  color: #9c9c9c;
}
.mic {
  width: 12px;
  height: 18px;
}
.task {
  display: grid;
  place-items: center;
  width: 48px;
  margin-right: 1px;
}
.task.view {
  margin-right: 3px;
}
.glyph {
  width: 20px;
  height: 14px;
}
.medium {
  width: 24px;
  height: 24px;
}
.open {
  background: linear-gradient(#76b9ed, #76b9ed) center bottom / 40px 2px no-repeat;
}
.current {
  background: linear-gradient(#76b9ed, #76b9ed) center bottom / 48px 2px no-repeat, linear-gradient(90deg, rgba(255, 255, 255, 0.22) 44px, rgba(255, 255, 255, 0.12) 44px);
}
.tray {
  display: flex;
  gap: 6px;
  margin-left: auto;
}
.tray svg {
  display: block;
  width: 17px;
  height: 14px;
}
.clock {
  display: flex;
  flex-direction: column;
  align-items: center;
  width: 81px;
  padding-top: 2px;
  font-size: 11px;
  line-height: 18px;
}
.notify {
  width: 29px;
}
.notify svg {
  display: block;
  width: 17px;
  height: 17px;
  margin: 0 auto;
}
.peek {
  width: 5px;
  margin-left: 13px;
  border-left: 1px solid #6a6c70;
}
</style>
